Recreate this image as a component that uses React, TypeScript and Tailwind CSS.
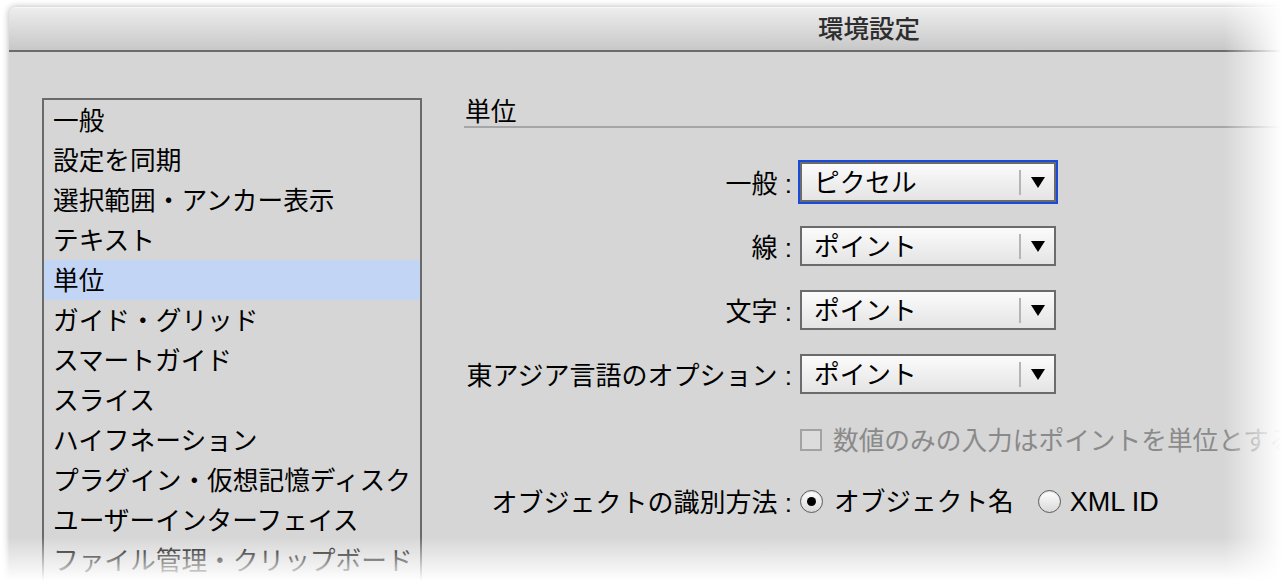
import React from "react";

const listItems = [
  "一般",
  "設定を同期",
  "選択範囲・アンカー表示",
  "テキスト",
  "単位",
  "ガイド・グリッド",
  "スマートガイド",
  "スライス",
  "ハイフネーション",
  "プラグイン・仮想記憶ディスク",
  "ユーザーインターフェイス",
  "ファイル管理・クリップボード",
  "ブラックのアピアランス",
];

const unitRows = [
  { label: "一般 :", value: "ピクセル", focused: true },
  { label: "線 :", value: "ポイント", focused: false },
  { label: "文字 :", value: "ポイント", focused: false },
  { label: "東アジア言語のオプション :", value: "ポイント", focused: false },
];

function Dropdown({ value, focused }: { value: string; focused: boolean }) {
  return (
    <div
      className={`flex items-center w-[256px] h-[40px] border-2 border-[#6b6b6b] bg-linear-to-b from-[#fbfbfb] to-[#e4e4e4] ${
        focused ? "outline-2 outline-[#1a4bd8]" : ""
      }`}
    >
      <span className="flex-1 pl-[12px] pt-[3px] text-[25.7px] leading-none text-black">{value}</span>
      <div className="w-[2px] h-[25px] bg-[#b5b5b5]" />
      <div className="w-[33px] flex items-center justify-center">
        <svg width="14" height="11" viewBox="0 0 14 11">
          <path d="M0 0 L14 0 L7 11 Z" fill="#000" />
        </svg>
      </div>
    </div>
  );
}

function Radio({ checked }: { checked: boolean }) {
  return (
    <div className="w-[23px] h-[23px] rounded-full border border-[#5c5c5c] bg-linear-to-b from-[#ffffff] to-[#d9d9d9] flex items-center justify-center shadow-[inset_0_1px_1px_rgba(0,0,0,0.15)]">
      {checked && <div className="w-[9px] h-[9px] rounded-full bg-black" />}
    </div>
  );
}

export default function App() {
  return (
    <div className="relative w-[1282px] h-[581px] overflow-hidden bg-white font-['Liberation_Sans','Noto_Sans_CJK_JP',sans-serif]">
      {/* ---- Window ---- */}
      <div className="ml-[9px] mt-[7px] w-[1720px] h-[700px] rounded-t-[6px] bg-[#d6d6d6] shadow-[0_0_7px_rgba(0,0,0,0.3)] overflow-hidden flex flex-col">
        {/* ---- Title bar ---- */}
        <div className="h-[45px] shrink-0 flex items-center justify-center bg-linear-to-b from-[#ededed] to-[#c8c8c8] border-t border-t-[#f7f7f7] border-b-2 border-b-[#6c6c6c]">
          <span className="pt-[2px] text-[25.5px] leading-none font-medium text-[#2e2e2e]">環境設定</span>
        </div>

        {/* ---- Body ---- */}
        <div className="flex items-start pl-[33px] pt-[44px]">
          {/* ---- Category list ---- */}
          <div className="mt-[2px] w-[380px] h-[560px] border-2 border-[#6a6a6a] overflow-hidden">
            {listItems.map((item) => (
              <div
                key={item}
                className={`h-[40px] px-[9px] pt-[4px] flex items-center text-[25.7px] leading-none text-black whitespace-nowrap ${
                  item === "単位" ? "bg-[#c3d5f4]" : ""
                }`}
              >
                {item}
              </div>
            ))}
          </div>

          {/* ---- Units panel ---- */}
          <div className="flex-1 ml-[42px]">
            <div className="h-[32px] pt-[3px] flex items-center border-b-2 border-[#a6a6a6] text-[25.7px] leading-none text-black pl-px">
              単位
            </div>

            <div className="mt-[34px] flex flex-col gap-[24px]">
              {unitRows.map((row) => (
                <div key={row.label} className="flex items-center h-[40px]">
                  <div className="w-[328px] pt-[3px] text-right text-[26px] leading-none text-black whitespace-nowrap">
                    {row.label}
                  </div>
                  <div className="ml-[8px]">
                    <Dropdown value={row.value} focused={row.focused} />
                  </div>
                </div>
              ))}
            </div>

            {/* ---- Disabled checkbox ---- */}
            <div className="mt-[26px] flex items-center h-[40px] pl-[336px]">
              <div className="w-[22px] h-[22px] border-2 border-[#a3a3a3] bg-[#dcdcdc]" />
              <span className="ml-[11px] pt-[3px] text-[25.7px] leading-none text-[#8a8a8a] whitespace-nowrap">
                数値のみの入力はポイントを単位とする
              </span>
            </div>

            {/* ---- Object identification ---- */}
            <div className="mt-[21px] flex items-center h-[40px]">
              <div className="w-[328px] pt-[3px] text-right text-[26px] leading-none text-black whitespace-nowrap">
                オブジェクトの識別方法 :
              </div>
              <div className="ml-[8px] flex items-center">
                <Radio checked />
                <span className="ml-[11px] pt-[3px] text-[25.7px] leading-none text-black">オブジェクト名</span>
                <div className="ml-[24px]">
                  <Radio checked={false} />
                </div>
                <span className="ml-[9px] pt-[2px] text-[27px] leading-none text-black">XML ID</span>
              </div>
            </div>
          </div>
        </div>
      </div>

      {/* ---- Edge fades over the window ---- */}
      <div className="absolute top-0 right-0 h-full w-[58px] bg-linear-to-r from-white/0 to-white" />
      <div className="absolute bottom-0 left-0 w-full h-[44px] bg-linear-to-b from-white/0 to-white" />
    </div>
  );
}
